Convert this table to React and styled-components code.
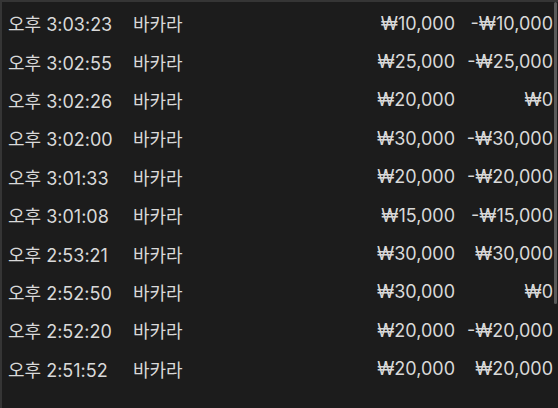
import React from 'react';
import styled, { createGlobalStyle } from 'styled-components';

const GlobalStyle = createGlobalStyle`
  html, body {
    margin: 0;
    padding: 0;
    background: #1c1c1c;
  }
`;

const Panel = styled.div`
  position: relative;
  width: 558px;
  height: 408px;
  box-sizing: border-box;
  overflow: hidden;
  background: #1c1c1c;
  border-top: 2px solid #353535;
  border-left: 2px solid #353535;
  padding-top: 2px;
  font-family: Inter, "Noto Sans CJK KR", sans-serif;
  font-size: 18px;
  color: #d9d9d9;
`;

const Row = styled.div`
  display: grid;
  grid-template-columns: 125px 1fr 110px 98px;
  align-items: center;
  height: 38.4px;
  padding: 0 5px 0 6px;
  white-space: nowrap;
`;

const Cell = styled.span`
  text-align: ${(p) => (p.$right ? 'right' : 'left')};
`;

const Thumb = styled.div`
  position: absolute;
  top: 0;
  right: 1px;
  width: 3px;
  height: 302px;
  background: #5a5a5a;
  border-radius: 2px;
`;

const rows = [
  ['오후 3:03:23', '바카라', '₩10,000', '-₩10,000'],
  ['오후 3:02:55', '바카라', '₩25,000', '-₩25,000'],
  ['오후 3:02:26', '바카라', '₩20,000', '₩0'],
  ['오후 3:02:00', '바카라', '₩30,000', '-₩30,000'],
  ['오후 3:01:33', '바카라', '₩20,000', '-₩20,000'],
  ['오후 3:01:08', '바카라', '₩15,000', '-₩15,000'],
  ['오후 2:53:21', '바카라', '₩30,000', '₩30,000'],
  ['오후 2:52:50', '바카라', '₩30,000', '₩0'],
  ['오후 2:52:20', '바카라', '₩20,000', '-₩20,000'],
  ['오후 2:51:52', '바카라', '₩20,000', '₩20,000'],
];

const App = () => (
  <>
    <GlobalStyle />
    <Panel>
      {rows.map(([time, game, bet, result]) => (
        <Row key={time}>
          <Cell>{time}</Cell>
          <Cell>{game}</Cell>
          <Cell $right>{bet}</Cell>
          <Cell $right>{result}</Cell>
        </Row>
      ))}
      <Thumb />
    </Panel>
  </>
);

export default App;
